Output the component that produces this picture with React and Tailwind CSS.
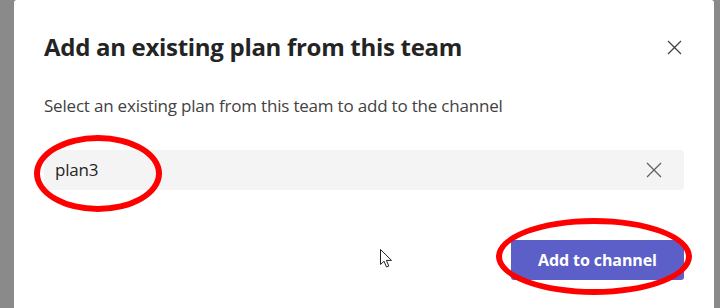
export default function App() {
  const font = { fontFamily: '"Open Sans", "Noto Sans", Arial, sans-serif' };
  return (
    <div className="relative w-[720px] h-[308px] overflow-hidden bg-[#8a8a8a]" style={font}>
      <div className="absolute left-[14px] top-0 w-[700px] h-[308px] bg-white rounded-t-[3px] flex flex-col px-[30px]">
        <div className="flex items-center justify-between h-[50px] mt-[22px]">
          <h1 className="text-[24px] font-bold text-[#242424] tracking-[-0.3px] leading-none">Add an existing plan from this team</h1>
          <svg width="15" height="15" viewBox="0 0 15 15" className="mr-[2px]">
            <path d="M1 1 L14 14 M14 1 L1 14" stroke="#424242" strokeWidth="1.3" fill="none" />
          </svg>
        </div>
        <p className="mt-[22px] text-[17px] text-[#424242] tracking-[-0.2px] leading-[24px]">Select an existing plan from this team to add to the channel</p>
        <div className="mt-[32px] h-[40px] bg-[#f4f4f4] rounded-[3px] flex items-center justify-between pl-[11px] pr-[22px]">
          <span className="text-[17px] text-[#242424] tracking-[-0.2px]">plan3</span>
          <svg width="16" height="16" viewBox="0 0 16 16">
            <path d="M1 1 L15 15 M15 1 L1 15" stroke="#616161" strokeWidth="1.3" fill="none" />
          </svg>
        </div>
        <div className="mt-[50px] flex justify-end">
          <button className="w-[173px] h-[40px] bg-[#5b5fc7] text-white text-[16px] font-bold tracking-[-0.1px] rounded-[3px]">Add to channel</button>
        </div>
      </div>
      <div className="absolute left-[34px] top-[135px] w-[128px] h-[77px] rounded-[50%] border-[6px] border-[#ff0000]" />
      <div className="absolute left-[496px] top-[218px] w-[196px] h-[77px] rounded-[50%] border-[6px] border-[#ff0000]" />
      <svg className="absolute left-[380px] top-[249px]" width="13" height="19" viewBox="0 0 13 19">
        <path d="M0.5 0.5 L0.5 15.5 L4 12.2 L6.5 18 L8.8 17 L6.4 11.4 L11.5 11.4 Z" fill="white" stroke="#222" strokeWidth="1" strokeLinejoin="round" />
      </svg>
    </div>
  );
}
